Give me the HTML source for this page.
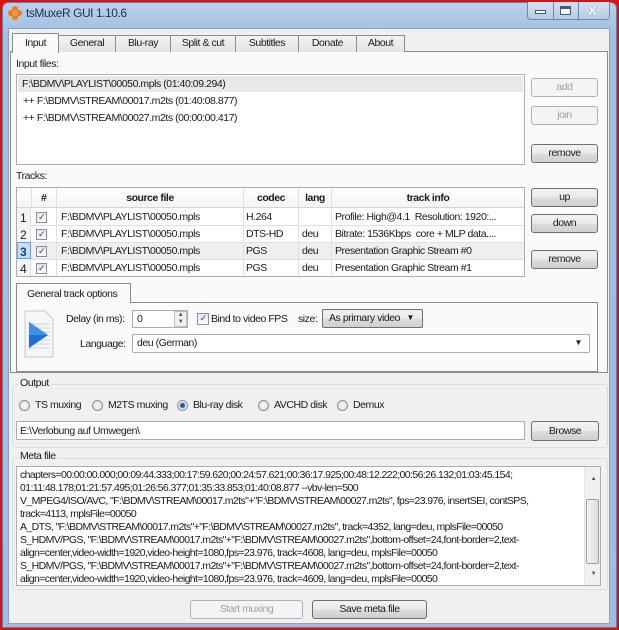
<!DOCTYPE html>
<html><head><meta charset="utf-8"><style>
*{box-sizing:border-box;margin:0;padding:0}
body{width:619px;height:630px;overflow:hidden;background:#e01010;font-family:"Liberation Sans",sans-serif;font-size:10.5px;letter-spacing:-0.45px;color:#1a1a1a;position:relative}
.a{position:absolute;white-space:nowrap}
.frame{left:2px;top:2px;width:615px;height:626px;background:linear-gradient(#b9d1ea,#a3c0e0 30px,#9fbde0);border:1px solid #5f7fa3;border-radius:6px 6px 0 0}
.body{left:8px;top:28px;width:602px;height:596px;background:#f0f0f0;border:1px solid #8aa2bf}
.btn{position:absolute;border:1px solid #707070;border-radius:3px;background:linear-gradient(#f2f2f2,#ebebeb 50%,#dddddd 51%,#cfcfcf);text-align:center;line-height:16px;white-space:nowrap}
.dis{border-color:#adb2b5;background:#f4f4f4;color:#a0a0a0}
.tab{position:absolute;top:35px;height:17px;border:1px solid #898c95;border-bottom:none;background:linear-gradient(#f2f2f2,#e3e3e3);text-align:center;line-height:15px}
.box{position:absolute;background:#fff;border:1px solid #abadb3}
.row{position:absolute;height:16px;line-height:16px;white-space:nowrap}
.cb{position:absolute;width:11px;height:11px;border:1px solid #8f8f8f;background:linear-gradient(#e0e6ee,#fafbfd);font-size:9px;line-height:9px;color:#2c4a8a;text-align:center}
.rad{position:absolute;width:11px;height:11px;border:1px solid #8f8f8f;border-radius:50%;background:radial-gradient(#fafafa,#d8d8d8)}
.gl{position:absolute;border:1px solid #d5dfe5;border-radius:3px}
.meta div{height:13px;line-height:13px;white-space:nowrap}
</style></head><body>
<div class="a frame"></div>
<svg class="a" style="left:7px;top:5px" width="16" height="16" viewBox="0 0 16 16"><g fill="#f07a20"><circle cx="8" cy="4" r="3"/><circle cx="4" cy="8" r="3"/><circle cx="12" cy="8" r="3"/><circle cx="8" cy="12" r="3"/><circle cx="8" cy="8" r="3" fill="#f59a40"/></g></svg>
<div class="a" style="left:26px;top:6px;font-size:12px;color:#1e3050">tsMuxeR GUI 1.10.6</div>
<div class="a" style="left:527px;top:2px;width:83px;height:18px;border:1px solid #6d87a8;border-top:none;border-radius:0 0 4px 4px;background:linear-gradient(#d5e3f3,#b4cbe6)"></div>
<div class="a" style="left:553px;top:2px;width:1px;height:18px;background:#6d87a8"></div>
<div class="a" style="left:578px;top:2px;width:1px;height:18px;background:#6d87a8"></div>
<div class="a" style="left:535px;top:10px;width:11px;height:4px;background:#fff;border:1px solid #44597a"></div>
<div class="a" style="left:560px;top:6px;width:11px;height:9px;border:1px solid #44597a;border-top:3px solid #44597a;background:#fff"></div>
<div class="a" style="left:588px;top:3px;font-size:13px;font-weight:bold;color:#fff;text-shadow:0 0 1px #44597a">X</div>
<div class="a body"></div>

<div class="a" style="left:10px;top:51px;width:598px;height:322px;border:1px solid #898c95;background:#fafafa"></div>
<div class="tab" style="left:58px;width:58px">General</div>
<div class="tab" style="left:115px;width:56px">Blu-ray</div>
<div class="tab" style="left:170px;width:66px">Split &amp; cut</div>
<div class="tab" style="left:235px;width:64px">Subtitles</div>
<div class="tab" style="left:298px;width:59px">Donate</div>
<div class="tab" style="left:356px;width:49px">About</div>
<div class="tab" style="left:12px;top:33px;width:47px;height:20px;background:#fafafa;line-height:19px">Input</div>

<div class="a" style="left:16px;top:58px">Input files:</div>
<div class="box" style="left:16px;top:74px;width:509px;height:91px">
<div class="row" style="left:1px;top:1px;width:505px;background:#e8e8e8;padding-left:4px">F:\BDMV\PLAYLIST\00050.mpls (01:40:09.294)</div>
<div class="row" style="left:6px;top:18px">++ F:\BDMV\STREAM\00017.m2ts (01:40:08.877)</div>
<div class="row" style="left:6px;top:35px">++ F:\BDMV\STREAM\00027.m2ts (00:00:00.417)</div>
</div>
<div class="btn dis" style="left:531px;top:78px;width:67px;height:19px">add</div>
<div class="btn dis" style="left:531px;top:106px;width:67px;height:19px">join</div>
<div class="btn" style="left:531px;top:144px;width:67px;height:19px">remove</div>

<div class="a" style="left:16px;top:170px">Tracks:</div>
<div class="box" style="left:16px;top:187px;width:509px;height:90px;overflow:hidden">
<div class="a" style="left:0;top:0;width:507px;height:20px;background:linear-gradient(#fff,#f3f4f6);border-bottom:1px solid #d5d5d5;font-weight:bold">
<div class="a" style="left:14px;top:0;height:20px;border-left:1px solid #e0e0e0"></div>
<div class="a" style="left:24px;top:4px">#</div>
<div class="a" style="left:39px;top:0;width:187px;height:20px;border-left:1px solid #e0e0e0;text-align:center;line-height:20px">source file</div>
<div class="a" style="left:226px;top:0;width:55px;height:20px;border-left:1px solid #e0e0e0;text-align:center;line-height:20px">codec</div>
<div class="a" style="left:281px;top:0;width:33px;height:20px;border-left:1px solid #e0e0e0;text-align:center;line-height:20px">lang</div>
<div class="a" style="left:314px;top:0;width:193px;height:20px;border-left:1px solid #e0e0e0;text-align:center;line-height:20px">track info</div>
</div>
<div class="a" style="left:0;top:20px;width:14px;height:70px;background:#f5f5f5;border-right:1px solid #e0e0e0"></div>
<div class="a" style="left:0;top:54px;width:14px;height:17px;background:#c9dff5;border:1px solid #6aa0d8"></div>
<div class="a" style="left:14px;top:54px;width:493px;height:17px;background:#efefef"></div>
<div class="a" style="left:3px;top:22px;line-height:17px;font-size:12px">1<br>2<br><b style="color:#12447a">3</b><br>4</div>
<div class="cb" style="left:19px;top:24px">✓</div><div class="cb" style="left:19px;top:41px">✓</div><div class="cb" style="left:19px;top:58px">✓</div><div class="cb" style="left:19px;top:75px">✓</div>
<div class="a" style="left:39px;top:20px;width:1px;height:70px;background:#e0e0e0"></div>
<div class="a" style="left:226px;top:20px;width:1px;height:70px;background:#e0e0e0"></div>
<div class="a" style="left:281px;top:20px;width:1px;height:70px;background:#e0e0e0"></div>
<div class="a" style="left:314px;top:20px;width:1px;height:70px;background:#e0e0e0"></div>
<div class="a" style="left:14px;top:37px;width:493px;height:1px;background:#e0e0e0"></div>
<div class="a" style="left:14px;top:54px;width:493px;height:1px;background:#e0e0e0"></div>
<div class="a" style="left:14px;top:71px;width:493px;height:1px;background:#e0e0e0"></div>
<div class="a" style="left:14px;top:88px;width:493px;height:1px;background:#e0e0e0"></div>
<div class="a" style="left:44px;top:21px;line-height:17px">F:\BDMV\PLAYLIST\00050.mpls<br>F:\BDMV\PLAYLIST\00050.mpls<br>F:\BDMV\PLAYLIST\00050.mpls<br>F:\BDMV\PLAYLIST\00050.mpls</div>
<div class="a" style="left:229px;top:21px;line-height:17px">H.264<br>DTS-HD<br>PGS<br>PGS</div>
<div class="a" style="left:285px;top:21px;line-height:17px">&nbsp;<br>deu<br>deu<br>deu</div>
<div class="a" style="left:318px;top:21px;line-height:17px">Profile: High@4.1&nbsp; Resolution: 1920:...<br>Bitrate: 1536Kbps&nbsp; core + MLP data....<br>Presentation Graphic Stream #0<br>Presentation Graphic Stream #1</div>
</div>
<div class="btn" style="left:531px;top:188px;width:67px;height:19px">up</div>
<div class="btn" style="left:531px;top:214px;width:67px;height:19px">down</div>
<div class="btn" style="left:531px;top:250px;width:67px;height:19px">remove</div>

<div class="a" style="left:16px;top:302px;width:582px;height:70px;border:1px solid #898c95;background:#fafafa"></div>
<div class="a" style="left:16px;top:283px;width:115px;height:20px;border:1px solid #898c95;border-bottom:none;background:#fafafa;padding:4px 0 0 10px">General track options</div>
<svg class="a" style="left:24px;top:310px" width="30" height="48" viewBox="0 0 30 48"><path d="M1 1H21L29 9V47H1Z" fill="#f4f6fa" stroke="#c4c8d0"/><g stroke="#c8d4e4"><path d="M4 14H26M4 18H26M4 22H26M4 26H26M4 30H26M4 34H26M4 38H26"/></g><path d="M5 12L24 25L5 38Z" fill="#1f6fd0"/><path d="M5 12L24 25L5 25Z" fill="#3d93ea"/></svg>
<div class="a" style="left:66px;top:313px">Delay (in ms):</div>
<div class="box" style="left:132px;top:310px;width:56px;height:18px;padding:2px 4px">0</div>
<div class="a" style="left:174px;top:311px;width:13px;height:16px;border:1px solid #c0c0c0;background:#f0f0f0;font-size:6px;line-height:7px;text-align:center;color:#555">▲<br>▼</div>
<div class="cb" style="left:197px;top:313px;width:12px;height:12px">✓</div>
<div class="a" style="left:211px;top:313px">Bind to video FPS</div>
<div class="a" style="left:298px;top:313px">size:</div>
<div class="btn" style="left:322px;top:309px;width:101px;height:19px;text-align:left;padding-left:6px;border-radius:2px">As primary video<span style="position:absolute;right:8px;font-size:8px">▼</span></div>
<div class="a" style="left:80px;top:338px">Language:</div>
<div class="btn" style="left:132px;top:334px;width:458px;height:19px;text-align:left;padding-left:4px;border-radius:2px;background:#fff;border-color:#abadb3">deu (German)<span style="position:absolute;right:7px;font-size:8px">▼</span></div>

<div class="gl" style="left:12px;top:384px;width:596px;height:64px"></div>
<div class="a" style="left:18px;top:377px;background:#f0f0f0;padding:0 2px">Output</div>
<div class="rad" style="left:19px;top:400px"></div><div class="a" style="left:35px;top:399px">TS muxing</div>
<div class="rad" style="left:92px;top:400px"></div><div class="a" style="left:108px;top:399px">M2TS muxing</div>
<div class="rad" style="left:177px;top:400px;background:radial-gradient(#1a5a9a 30%,#8fc0ee 40%,#e8eef5 60%)"></div><div class="a" style="left:193px;top:399px">Blu-ray disk</div>
<div class="rad" style="left:258px;top:400px"></div><div class="a" style="left:274px;top:399px">AVCHD disk</div>
<div class="rad" style="left:337px;top:400px"></div><div class="a" style="left:353px;top:399px">Demux</div>
<div class="box" style="left:16px;top:421px;width:509px;height:19px;padding:3px 3px">E:\Verlobung auf Umwegen\</div>
<div class="btn" style="left:531px;top:421px;width:68px;height:20px;line-height:18px">Browse</div>

<div class="gl" style="left:12px;top:458px;width:596px;height:132px"></div>
<div class="a" style="left:18px;top:450px;background:#f0f0f0;padding:0 2px">Meta file</div>
<div class="box meta" style="left:16px;top:466px;width:585px;height:120px;padding:2px 0 0 3px;font-size:10.5px;letter-spacing:-0.6px;overflow:hidden">
<div>chapters=00:00:00.000;00:09:44.333;00:17:59.620;00:24:57.621;00:36:17.925;00:48:12.222;00:56:26.132;01:03:45.154;</div>
<div>01:11:48.178;01:21:57.495;01:26:56.377;01:35:33.853;01:40:08.877 --vbv-len=500</div>
<div>V_MPEG4/ISO/AVC, "F:\BDMV\STREAM\00017.m2ts"+"F:\BDMV\STREAM\00027.m2ts", fps=23.976, insertSEI, contSPS,</div>
<div>track=4113, mplsFile=00050</div>
<div>A_DTS, "F:\BDMV\STREAM\00017.m2ts"+"F:\BDMV\STREAM\00027.m2ts", track=4352, lang=deu, mplsFile=00050</div>
<div>S_HDMV/PGS, "F:\BDMV\STREAM\00017.m2ts"+"F:\BDMV\STREAM\00027.m2ts",bottom-offset=24,font-border=2,text-</div>
<div>align=center,video-width=1920,video-height=1080,fps=23.976, track=4608, lang=deu, mplsFile=00050</div>
<div>S_HDMV/PGS, "F:\BDMV\STREAM\00017.m2ts"+"F:\BDMV\STREAM\00027.m2ts",bottom-offset=24,font-border=2,text-</div>
<div>align=center,video-width=1920,video-height=1080,fps=23.976, track=4609, lang=deu, mplsFile=00050</div>
<div class="a" style="right:0;top:0;width:16px;height:118px;background:#f0f0f0;border-left:1px solid #e5e5e5"></div>
<div class="a" style="right:4px;top:6px;font-size:6px;color:#555">▲</div>
<div class="a" style="right:4px;bottom:4px;font-size:6px;color:#555">▼</div>
<div class="a" style="right:1px;top:32px;width:13px;height:65px;border:1px solid #a0a0a0;border-radius:2px;background:linear-gradient(90deg,#f4f4f4,#dedede)"></div>
</div>

<div class="btn dis" style="left:190px;top:600px;width:113px;height:19px">Start muxing</div>
<div class="btn" style="left:312px;top:600px;width:115px;height:19px">Save meta file</div>
</body></html>
